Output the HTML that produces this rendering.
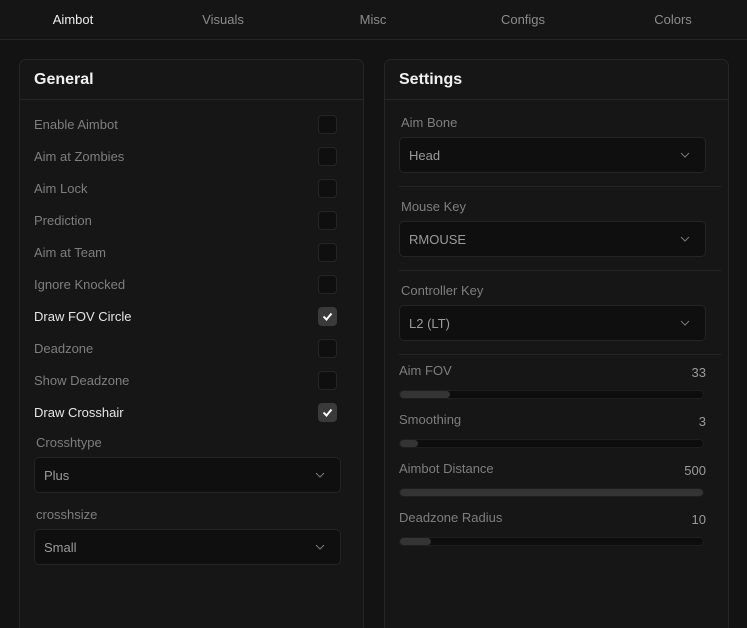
<!DOCTYPE html>
<html><head><style>
*{box-sizing:border-box;margin:0;padding:0}
html,body{width:747px;height:628px;overflow:hidden}
body{background:#131313;font-family:"Liberation Sans",sans-serif;position:relative;color:#8a8a8a}
.tabs{position:absolute;left:0;top:0;width:747px;height:40px;background:#151515;border-bottom:1px solid #242424}
.tab{position:absolute;top:12px;font-size:13px;color:#8c8c8c;transform:translateX(-50%)}
.panel{position:absolute;top:59px;height:575px;background:#161616;border:1px solid #262626;border-radius:7px}
.ph{height:40px;border-bottom:1px solid #262626;padding:11px 14px;font-size:16px;font-weight:bold;color:#f0f0f0}
.a{position:absolute}
.lbl{font-size:13px;color:#7e7e7e}
.on{color:#e6e6e6}
.cb{position:absolute;width:19px;height:19px;border:1px solid #252525;background:#0f0f0f;border-radius:4px}
.cb.chk{background:#3a3a3a;border-color:#3a3a3a}
.dd{position:absolute;height:36px;background:#0f0f0f;border:1px solid #242424;border-radius:5px;font-size:13px;color:#9a9a9a;padding:10px 9px}
.dd svg{position:absolute;right:15px;top:14px}
.sep{position:absolute;height:1px;background:#262626}
.tr{position:absolute;height:9px;background:#0d0d0d;border:1px solid #1e1e1e;border-radius:5px;width:305px;left:399px}
.fl{height:100%;background:#343434;border-radius:4px}
.val{position:absolute;font-size:13px;color:#9a9a9a;text-align:right;width:60px;left:646px}
</style></head><body>
<div class="tabs">
<div class="tab" style="left:73px;color:#eee">Aimbot</div>
<div class="tab" style="left:223px">Visuals</div>
<div class="tab" style="left:373px">Misc</div>
<div class="tab" style="left:523px">Configs</div>
<div class="tab" style="left:673px">Colors</div>
</div>
<div class="panel" style="left:19px;width:345px"><div class="ph">General</div></div>
<div class="panel" style="left:384px;width:345px"><div class="ph">Settings</div></div>

<div class="a lbl" style="left:34px;top:117px">Enable Aimbot</div><div class="cb" style="left:318px;top:115px"></div>
<div class="a lbl" style="left:34px;top:149px">Aim at Zombies</div><div class="cb" style="left:318px;top:147px"></div>
<div class="a lbl" style="left:34px;top:181px">Aim Lock</div><div class="cb" style="left:318px;top:179px"></div>
<div class="a lbl" style="left:34px;top:213px">Prediction</div><div class="cb" style="left:318px;top:211px"></div>
<div class="a lbl" style="left:34px;top:245px">Aim at Team</div><div class="cb" style="left:318px;top:243px"></div>
<div class="a lbl" style="left:34px;top:277px">Ignore Knocked</div><div class="cb" style="left:318px;top:275px"></div>
<div class="a lbl on" style="left:34px;top:309px">Draw FOV Circle</div><div class="cb chk" style="left:318px;top:307px"><svg width="19" height="19" style="position:absolute;left:-1px;top:-1px"><path d="M5.5 9.5 L8.5 12.5 L13.5 6.5" stroke="#fff" stroke-width="2" fill="none"/></svg></div>
<div class="a lbl" style="left:34px;top:341px">Deadzone</div><div class="cb" style="left:318px;top:339px"></div>
<div class="a lbl" style="left:34px;top:373px">Show Deadzone</div><div class="cb" style="left:318px;top:371px"></div>
<div class="a lbl on" style="left:34px;top:405px">Draw Crosshair</div><div class="cb chk" style="left:318px;top:403px"><svg width="19" height="19" style="position:absolute;left:-1px;top:-1px"><path d="M5.5 9.5 L8.5 12.5 L13.5 6.5" stroke="#fff" stroke-width="2" fill="none"/></svg></div>

<div class="a lbl" style="left:36px;top:435px">Crosshtype</div>
<div class="dd" style="left:34px;top:457px;width:307px">Plus<svg width="10" height="6"><path d="M1 1 L5 5 L9 1" stroke="#777" fill="none"/></svg></div>
<div class="a lbl" style="left:36px;top:507px">crosshsize</div>
<div class="dd" style="left:34px;top:529px;width:307px">Small<svg width="10" height="6"><path d="M1 1 L5 5 L9 1" stroke="#777" fill="none"/></svg></div>

<div class="a lbl" style="left:401px;top:115px">Aim Bone</div>
<div class="dd" style="left:399px;top:137px;width:307px">Head<svg width="10" height="6"><path d="M1 1 L5 5 L9 1" stroke="#777" fill="none"/></svg></div>
<div class="sep" style="left:399px;top:186px;width:322px"></div>
<div class="a lbl" style="left:401px;top:199px">Mouse Key</div>
<div class="dd" style="left:399px;top:221px;width:307px">RMOUSE<svg width="10" height="6"><path d="M1 1 L5 5 L9 1" stroke="#777" fill="none"/></svg></div>
<div class="sep" style="left:399px;top:270px;width:322px"></div>
<div class="a lbl" style="left:401px;top:283px">Controller Key</div>
<div class="dd" style="left:399px;top:305px;width:307px">L2 (LT)<svg width="10" height="6"><path d="M1 1 L5 5 L9 1" stroke="#777" fill="none"/></svg></div>
<div class="sep" style="left:399px;top:354px;width:322px"></div>

<div class="a lbl" style="left:399px;top:363px">Aim FOV</div><div class="val" style="top:365px">33</div>
<div class="tr" style="top:390px"><div class="fl" style="width:50px"></div></div>
<div class="a lbl" style="left:399px;top:412px">Smoothing</div><div class="val" style="top:414px">3</div>
<div class="tr" style="top:439px"><div class="fl" style="width:18px"></div></div>
<div class="a lbl" style="left:399px;top:461px">Aimbot Distance</div><div class="val" style="top:463px">500</div>
<div class="tr" style="top:488px"><div class="fl" style="width:100%"></div></div>
<div class="a lbl" style="left:399px;top:510px">Deadzone Radius</div><div class="val" style="top:512px">10</div>
<div class="tr" style="top:537px"><div class="fl" style="width:31px"></div></div>
</body></html>
